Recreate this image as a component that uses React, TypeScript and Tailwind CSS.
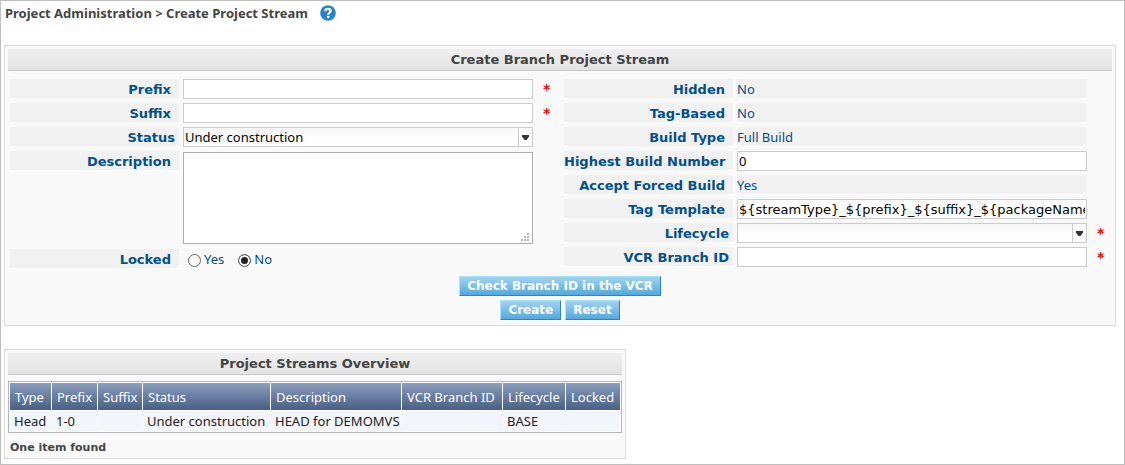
import type { ReactNode } from 'react';

const bold = "font-['DejaVu_Sans',sans-serif] font-bold";
const inputClass =
  'block h-5 w-full min-w-0 rounded-none border border-[#ccc] bg-white px-px text-[13px] leading-[18px] text-black outline-none';

function Panel({ title, className, children }: { title: string; className?: string; children: ReactNode }) {
  return (
    <section className={`border border-[#dadada] bg-[#f9f9f9] pt-[3px] ${className ?? ''}`}>
      <h2
        className={`${bold} mx-[3px] h-[22px] border-b border-[#c8c8c8] bg-linear-to-b from-[#efefef] to-[#e3e3e3] text-center text-[13px] leading-[21px] text-[#444]`}
      >
        {title}
      </h2>
      {children}
    </section>
  );
}

type RowProps = { label: string; id?: string; tight?: boolean; required?: boolean; children: ReactNode };

function Row({ label, id, tight, required, children }: RowProps) {
  const cls = `${bold} h-5 w-[169px] shrink-0 border-b border-white bg-[#f1f1f1] text-right text-[13px] leading-[21px] whitespace-nowrap text-[#00508c] ${
    tight ? 'pr-1' : 'pr-2'
  }`;
  return (
    <div className="flex items-start gap-1">
      {id ? (
        <label htmlFor={id} className={cls}>
          {label}
        </label>
      ) : (
        <span className={cls}>{label}</span>
      )}
      <div className="min-w-0 flex-1">{children}</div>
      <span className={`${bold} h-5 w-[23px] shrink-0 pl-1.5 text-[14px] leading-5 text-[#f00]`}>
        {required ? '*' : ''}
      </span>
    </div>
  );
}

function Value({ children }: { children: ReactNode }) {
  return <div className="h-5 border-b border-white bg-[#f1f1f1] leading-[21px]">{children}</div>;
}

function Select({ id, options }: { id: string; options: string[] }) {
  return (
    <div className="relative">
      <select
        id={id}
        className="block h-5 w-full appearance-none rounded-none border border-[#ccc] bg-linear-to-b from-[#f5f5f5] to-white to-60% px-px text-[13px] leading-[18px] text-black outline-none"
      >
        {options.map((o) => (
          <option key={o}>{o}</option>
        ))}
      </select>
      <span className="pointer-events-none absolute inset-y-px right-px flex w-3.5 items-center justify-center border-l border-[#ccc] bg-white">
        <svg width="7" height="5" viewBox="0 0 7 5" fill="#333" aria-hidden="true">
          <path d="M0 0h7v1.500L4.500 5h-2L0 1.500z" />
        </svg>
      </span>
    </div>
  );
}

function Radio({ label, checked }: { label: string; checked?: boolean }) {
  return (
    <label className="flex items-center gap-[3px]">
      <input
        type="radio"
        name="locked"
        defaultChecked={checked}
        className="mt-0.5 size-[13px] appearance-none rounded-full border border-[#666] bg-white checked:bg-[#222] checked:shadow-[inset_0_0_0_2px_white]"
      />
      {label}
    </label>
  );
}

function Button({ children, type = 'button' }: { children: ReactNode; type?: 'button' | 'submit' | 'reset' }) {
  return (
    <button
      type={type}
      className={`${bold} h-5 border border-t-[#a8e4fb] border-r-[#2389c6] border-b-[#2389c6] border-l-[#a8e4fb] bg-linear-to-b from-[#a0d3f1] to-[#50a9df] px-[7px] text-[12px] leading-[18px] text-white`}
    >
      {children}
    </button>
  );
}

const columns = [
  { name: 'Type', width: 'w-[41px]', value: 'Head' },
  { name: 'Prefix', width: 'w-[45px]', value: '1-0' },
  { name: 'Suffix', width: 'w-[44px]', value: '' },
  { name: 'Status', width: 'w-[127px]', value: 'Under construction' },
  { name: 'Description', width: 'w-[130px]', value: 'HEAD for DEMOMVS' },
  { name: 'VCR Branch ID', width: 'w-[100px]', value: '' },
  { name: 'Lifecycle', width: 'w-[62px]', value: 'BASE' },
  { name: 'Locked', width: 'w-[54px]', value: '' },
];

export default function App() {
  return (
    <main className="min-h-screen border border-[#bfbfbf] bg-white pr-2 pb-[5px] pl-[3px] font-['Noto_Sans','DejaVu_Sans',sans-serif] text-[13px] leading-5 text-[#00508c]">
      <header className="flex h-6 items-center gap-3 pl-px">
        <h1 className="text-[13px] font-bold text-[#444]">Project Administration &gt; Create Project Stream</h1>
        <a href="#help" aria-label="Help">
          <svg width="16" height="16" viewBox="0 0 16 16" aria-hidden="true">
            <circle cx="8" cy="8" r="7.8" fill="#2484c6" />
            <path
              d="M5.200 6.200C5.300 4.500 6.500 3.800 8 3.800s2.700.8 2.700 2.200C10.700 7.700 8.200 7.800 8.200 9.800"
              fill="none"
              stroke="#fff"
              strokeWidth="2.200"
            />
            <rect x="7" y="10.900" width="2.400" height="2.200" fill="#fff" />
          </svg>
        </a>
      </header>

      <Panel title="Create Branch Project Stream" className="mt-5 pb-[5px]">
        <form>
          <div className="mt-2 flex gap-1 pr-px pl-[5px]">
            <div className="flex min-w-0 flex-1 flex-col gap-1">
              <Row label="Prefix" id="prefix" required>
                <input id="prefix" className={inputClass} />
              </Row>
              <Row label="Suffix" id="suffix" required>
                <input id="suffix" className={inputClass} />
              </Row>
              <Row label="Status" id="status" tight>
                <Select id="status" options={['Under construction']} />
              </Row>
              <Row label="Description" id="description">
                <div className="relative py-px">
                  <textarea
                    id="description"
                    className="block h-[92px] w-full resize-none rounded-none border border-[#abadb3] bg-white px-px text-black outline-none"
                  />
                  <svg
                    className="pointer-events-none absolute right-1 bottom-1"
                    width="8"
                    height="8"
                    viewBox="0 0 8 8"
                    fill="#bbb"
                    aria-hidden="true"
                  >
                    <path d="M6 0h2v2H6zM3 3h2v2H3zM6 3h2v2H6zM0 6h2v2H0zM3 6h2v2H3zM6 6h2v2H6z" />
                  </svg>
                </div>
              </Row>
              <Row label="Locked">
                <div className="flex gap-3.5 pl-[5px]">
                  <Radio label="Yes" />
                  <Radio label="No" checked />
                </div>
              </Row>
            </div>
            <div className="flex min-w-0 flex-1 flex-col gap-1">
              <Row label="Hidden">
                <Value>No</Value>
              </Row>
              <Row label="Tag-Based">
                <Value>No</Value>
              </Row>
              <Row label="Build Type">
                <Value>Full Build</Value>
              </Row>
              <Row label="Highest Build Number" id="highest">
                <input id="highest" defaultValue="0" className={inputClass} />
              </Row>
              <Row label="Accept Forced Build">
                <Value>Yes</Value>
              </Row>
              <Row label="Tag Template" id="template">
                <input
                  id="template"
                  defaultValue="${streamType}_${prefix}_${suffix}_${packageName}"
                  className={`${inputClass} font-['DejaVu_Sans',sans-serif]`}
                />
              </Row>
              <Row label="Lifecycle" id="lifecycle" tight required>
                <Select id="lifecycle" options={['']} />
              </Row>
              <Row label="VCR Branch ID" id="branch" tight required>
                <input id="branch" className={inputClass} />
              </Row>
            </div>
          </div>
          <div className="mt-[7px] flex flex-col items-center gap-1">
            <Button>Check Branch ID in the VCR</Button>
            <div className="flex gap-1">
              <Button type="submit">Create</Button>
              <Button type="reset">Reset</Button>
            </div>
          </div>
        </form>
      </Panel>

      <Panel title="Project Streams Overview" className="mt-[23px] w-fit">
        <div className="mx-[3px] mt-1.5">
          <table className="w-[614px] table-fixed border-separate border-spacing-px border border-[#b5b5b5] bg-white">
            <thead>
              <tr className="h-[27px] text-white">
                {columns.map((c) => (
                  <th
                    key={c.name}
                    className={`${c.width} bg-linear-to-b from-[#8a9ebd] to-[#4a5f85] p-0 pl-[5px] text-left font-normal whitespace-nowrap`}
                  >
                    {c.name}
                  </th>
                ))}
              </tr>
            </thead>
            <tbody>
              <tr className="h-5 text-[#222]">
                {columns.map((c) => (
                  <td key={c.name} className="h-5 bg-[#f2f5fc] p-0 pl-1 whitespace-nowrap">
                    {c.value}
                  </td>
                ))}
              </tr>
            </tbody>
          </table>
          <p className={`${bold} pt-[5px] pl-0.5 text-[11px] text-[#444]`}>One item found</p>
        </div>
      </Panel>
    </main>
  );
}
